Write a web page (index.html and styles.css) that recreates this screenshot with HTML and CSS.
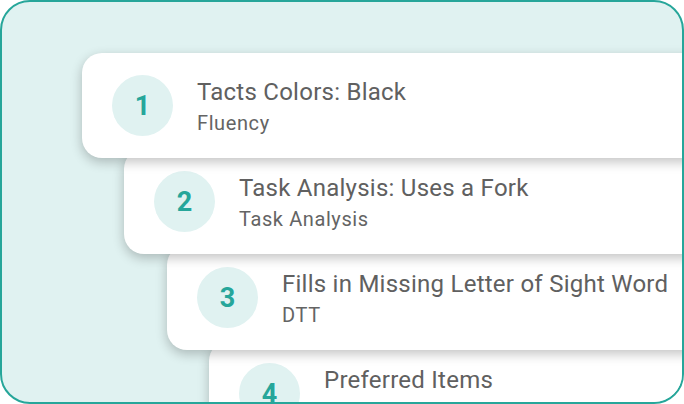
FILE: index.html
```html
<!DOCTYPE html>
<html>
<head>
<meta charset="utf-8">
<link rel="stylesheet" href="styles.css">
</head>
<body>
<div class="frame">
  <div class="list">
    <div class="card step-1">
      <div class="num">1</div>
      <div class="text">
        <div class="title">Tacts Colors: Black</div>
        <div class="sub">Fluency</div>
      </div>
    </div>
    <div class="card step-2">
      <div class="num">2</div>
      <div class="text">
        <div class="title">Task Analysis: Uses a Fork</div>
        <div class="sub">Task Analysis</div>
      </div>
    </div>
    <div class="card step-3">
      <div class="num">3</div>
      <div class="text">
        <div class="title">Fills in Missing Letter of Sight Word</div>
        <div class="sub">DTT</div>
      </div>
    </div>
    <div class="card step-4">
      <div class="num">4</div>
      <div class="text">
        <div class="title">Preferred Items</div>
        <div class="sub">&nbsp;</div>
      </div>
    </div>
  </div>
</div>
</body>
</html>
```
FILE: styles.css
```css
html, body {
  margin: 0;
  padding: 0;
}
body {
  font-family: Roboto, "Noto Sans", sans-serif;
  background: #ffffff;
}
.frame {
  box-sizing: border-box;
  width: 684px;
  height: 404px;
  border: 2px solid #26a69a;
  border-radius: 30px;
  background: #e0f2f1;
  overflow: hidden;
}
.list {
  display: flex;
  flex-direction: column;
  padding: 51px 0 0 80px;
}
.card {
  position: relative;
  flex-shrink: 0;
  width: 760px;
  height: 105px;
  box-sizing: border-box;
  background: #ffffff;
  border-radius: 20px;
  box-shadow: 0 4px 12px rgba(0, 0, 0, 0.24);
  display: flex;
  align-items: center;
  padding-left: 30px;
  gap: 24px;
  margin-top: -9px;
}
.step-1 { margin-top: 0; z-index: 4; }
.step-2 { margin-left: 42px; z-index: 3; }
.step-3 { margin-left: 85px; z-index: 2; }
.step-4 { margin-left: 127px; z-index: 1; }
.num {
  width: 61px;
  height: 61px;
  border-radius: 50%;
  background: #e0f2f1;
  color: #26a69a;
  font-size: 27px;
  font-weight: 700;
  display: flex;
  align-items: center;
  justify-content: center;
  flex-shrink: 0;
}
.text {
  display: flex;
  flex-direction: column;
  gap: 5px;
  padding-top: 2px;
}
.title {
  font-size: 24px;
  font-weight: 400;
  letter-spacing: 0.25px;
  color: #606060;
  line-height: 28px;
}
.sub {
  font-size: 20px;
  color: #646464;
  letter-spacing: 0.6px;
  line-height: 24px;
}
```
